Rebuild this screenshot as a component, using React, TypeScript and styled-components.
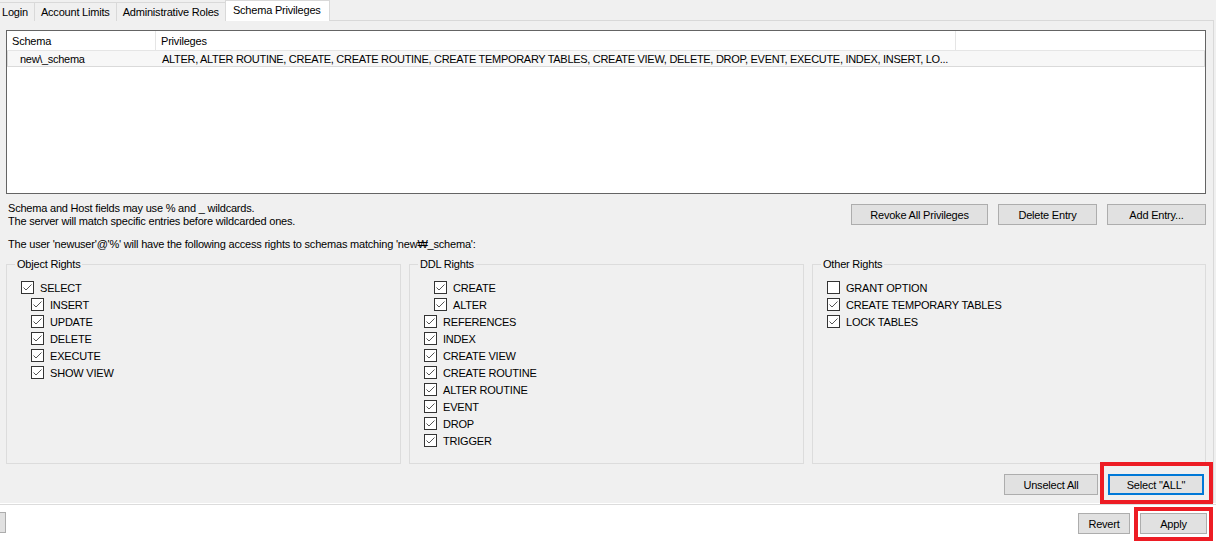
import React from 'react';
import styled, { createGlobalStyle, css } from 'styled-components';

const GlobalStyle = createGlobalStyle`
  html, body {
    margin: 0;
    padding: 0;
    background: #f0f0f0;
  }
  body {
    font-family: "Liberation Sans", Arial, sans-serif;
    font-size: 11px;
    letter-spacing: -0.2px;
    color: #000;
  }
  * {
    box-sizing: border-box;
  }
`;

const Root = styled.div`
  display: flex;
  flex-direction: column;
  height: 541px;
  overflow: hidden;
  position: relative;
  width: 1216px;
`;

const TabBar = styled.div`
  align-items: flex-end;
  display: flex;
  height: 21px;
  margin-bottom: -1px;
  position: relative;
  z-index: 1;
`;

const Tab = styled.div<{ $active?: boolean; $first?: boolean }>`
  align-items: center;
  background: #f0f0f0;
  border: 1px solid #d9d9d9;
  border-bottom: none;
  display: flex;
  height: 19px;
  margin-right: -1px;
  padding: 0 6px;
  white-space: nowrap;

  ${({ $first }) =>
    $first &&
    css`
      border-left: none;
      padding-left: 2px;
    `}

  ${({ $active }) =>
    $active &&
    css`
      background: #fff;
      height: 21px;
      padding: 0 8px 2px 7px;
    `}
`;

const Pane = styled.div`
  border-right: 1px solid #d9d9d9;
  border-top: 1px solid #d9d9d9;
  display: flex;
  flex-direction: column;
  height: 483px;
  margin-right: 2px;
  padding: 9px 7px 0 6px;
`;

const Table = styled.div`
  background: #fff;
  border: 1px solid #646464;
  height: 164px;
  width: 1200px;
`;

const TableRow = styled.div<{ $header?: boolean }>`
  display: grid;
  grid-template-columns: 149px 800px 1fr;
  height: ${({ $header }) => ($header ? '20px' : '16px')};

  ${({ $header }) =>
    $header
      ? css`
          border-bottom: 1px solid #e5e5e5;
        `
      : css`
          background: #f7f7f7;
          border: 1px solid #dadada;
          border-top: none;
        `}
`;

const HeaderCell = styled.div`
  align-items: center;
  border-right: 1px solid #e5e5e5;
  display: flex;
  padding-left: 5px;
  white-space: nowrap;

  &:last-child {
    border-right: none;
  }
`;

const Cell = styled.div<{ $indent?: number }>`
  align-items: center;
  display: flex;
  letter-spacing: -0.3px;
  overflow: hidden;
  padding-left: ${({ $indent }) => $indent ?? 5}px;
  white-space: nowrap;
`;

const InfoRow = styled.div`
  align-items: flex-start;
  display: flex;
  justify-content: space-between;
  margin-top: 8px;
`;

const InfoText = styled.div`
  line-height: 13px;
  padding-left: 2px;
`;

const ButtonGroup = styled.div<{ $gap?: number }>`
  display: flex;
  gap: ${({ $gap }) => $gap ?? 10}px;
  padding-top: 2px;
`;

const Button = styled.button<{ $width: number; $focused?: boolean }>`
  background: #e1e1e1;
  border: 1px solid #adadad;
  color: #000;
  font-family: inherit;
  font-size: 11px;
  height: 21px;
  letter-spacing: inherit;
  padding: 0;
  width: ${({ $width }) => $width}px;

  ${({ $focused }) =>
    $focused &&
    css`
      border: 2px solid #0078d7;
    `}
`;

const AccessText = styled.div`
  line-height: 13px;
  margin-top: 10px;
  padding-left: 2px;
`;

const Groups = styled.div`
  display: grid;
  gap: 8px;
  grid-template-columns: 395px 395px 394px;
  margin-top: 7px;
`;

const GroupBox = styled.fieldset`
  border: 1px solid #dcdcdc;
  height: 206px;
  margin: 0;
  min-width: 0;
  padding: 8px 0 0 14px;
`;

const Legend = styled.legend`
  line-height: 13px;
  margin-left: -6px;
  padding: 0 2px;
`;

const CheckList = styled.div`
  display: flex;
  flex-direction: column;
`;

const CheckRow = styled.label<{ $indent?: boolean }>`
  align-items: center;
  display: flex;
  gap: 6px;
  height: 17px;
  padding-left: ${({ $indent }) => ($indent ? 10 : 0)}px;
`;

const Box = styled.span`
  align-items: center;
  background: #fff;
  border: 1px solid #333;
  display: inline-flex;
  flex-shrink: 0;
  height: 13px;
  justify-content: center;
  width: 13px;
`;

const BottomBar = styled.div`
  display: flex;
  justify-content: flex-end;
  margin-top: 8px;
  padding-right: 2px;
`;

const Separator = styled.div`
  background: #fff;
  border-bottom: 1px solid #dcdcdc;
  height: 2px;
`;

const Footer = styled.div`
  align-items: flex-start;
  background: #fff;
  display: flex;
  flex: 1;
  justify-content: space-between;
  padding: 6px 9px 0 0;
`;

const EdgeButton = styled.div`
  background: #e1e1e1;
  border: 1px solid #adadad;
  border-left: none;
  height: 21px;
  margin-top: 1px;
  width: 6px;
`;

const Highlight = styled.div<{ $x: number; $y: number; $w: number; $h: number }>`
  border: 4px solid #ed1c24;
  height: ${({ $h }) => $h}px;
  left: ${({ $x }) => $x}px;
  pointer-events: none;
  position: absolute;
  top: ${({ $y }) => $y}px;
  width: ${({ $w }) => $w}px;
`;

const Check = ({ checked = true }: { checked?: boolean }) => (
  <Box>
    {checked && (
      <svg width="11" height="11" viewBox="0 0 11 11">
        <path d="M1.5 5.5 L4 8 L9.5 2.5" fill="none" stroke="#555" strokeWidth="1" />
      </svg>
    )}
  </Box>
);

type Item = { label: string; indent?: boolean; checked?: boolean };

const objectRights: Item[] = [
  { label: 'SELECT' },
  { label: 'INSERT', indent: true },
  { label: 'UPDATE', indent: true },
  { label: 'DELETE', indent: true },
  { label: 'EXECUTE', indent: true },
  { label: 'SHOW VIEW', indent: true },
];

const ddlRights: Item[] = [
  { label: 'CREATE', indent: true },
  { label: 'ALTER', indent: true },
  { label: 'REFERENCES' },
  { label: 'INDEX' },
  { label: 'CREATE VIEW' },
  { label: 'CREATE ROUTINE' },
  { label: 'ALTER ROUTINE' },
  { label: 'EVENT' },
  { label: 'DROP' },
  { label: 'TRIGGER' },
];

const otherRights: Item[] = [
  { label: 'GRANT OPTION', checked: false },
  { label: 'CREATE TEMPORARY TABLES' },
  { label: 'LOCK TABLES' },
];

const Group = ({ title, items }: { title: string; items: Item[] }) => (
  <GroupBox>
    <Legend>{title}</Legend>
    <CheckList>
      {items.map((item) => (
        <CheckRow key={item.label} $indent={item.indent}>
          <Check checked={item.checked !== false} />
          {item.label}
        </CheckRow>
      ))}
    </CheckList>
  </GroupBox>
);

export default function App() {
  return (
    <Root>
      <GlobalStyle />
      <TabBar>
        <Tab $first>Login</Tab>
        <Tab>Account Limits</Tab>
        <Tab>Administrative Roles</Tab>
        <Tab $active>Schema Privileges</Tab>
      </TabBar>
      <Pane>
        <Table>
          <TableRow $header>
            <HeaderCell>Schema</HeaderCell>
            <HeaderCell>Privileges</HeaderCell>
            <HeaderCell />
          </TableRow>
          <TableRow>
            <Cell $indent={12}>new\_schema</Cell>
            <Cell>
              ALTER, ALTER ROUTINE, CREATE, CREATE ROUTINE, CREATE TEMPORARY TABLES, CREATE VIEW, DELETE, DROP,
              EVENT, EXECUTE, INDEX, INSERT, LO...
            </Cell>
            <Cell />
          </TableRow>
        </Table>
        <InfoRow>
          <InfoText>
            Schema and Host fields may use % and _ wildcards.
            <br />
            The server will match specific entries before wildcarded ones.
          </InfoText>
          <ButtonGroup>
            <Button $width={137}>Revoke All Privileges</Button>
            <Button $width={99}>Delete Entry</Button>
            <Button $width={99}>Add Entry...</Button>
          </ButtonGroup>
        </InfoRow>
        <AccessText>
          The user 'newuser'@'%' will have the following access rights to schemas matching 'new₩_schema':
        </AccessText>
        <Groups>
          <Group title="Object Rights" items={objectRights} />
          <Group title="DDL Rights" items={ddlRights} />
          <Group title="Other Rights" items={otherRights} />
        </Groups>
        <BottomBar>
          <ButtonGroup $gap={10}>
            <Button $width={94}>Unselect All</Button>
            <Button $width={96} $focused>
              Select "ALL"
            </Button>
          </ButtonGroup>
        </BottomBar>
      </Pane>
      <Separator />
      <Footer>
        <EdgeButton />
        <ButtonGroup $gap={10}>
          <Button $width={52}>Revert</Button>
          <Button $width={67}>Apply</Button>
        </ButtonGroup>
      </Footer>
      <Highlight $x={1100} $y={462} $w={113} $h={42} />
      <Highlight $x={1134} $y={507} $w={79} $h={34} />
    </Root>
  );
}
